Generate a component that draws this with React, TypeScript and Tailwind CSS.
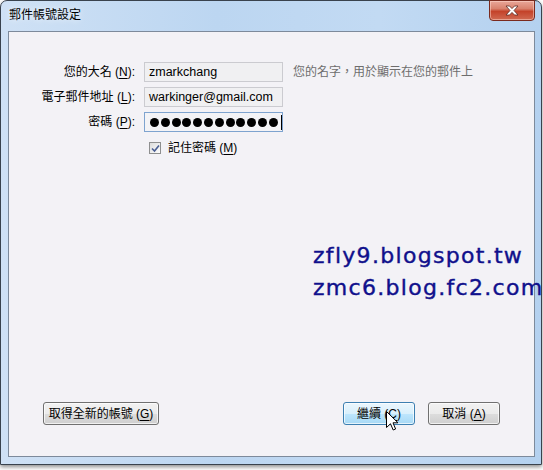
import React from "react";

const ui = { fontFamily: '"Liberation Sans", "Noto Sans CJK TC", sans-serif' };

function Btn({ label, hot, wide, focus }: { label: string; hot: string; wide: string; focus?: boolean }) {
    // win7 style push button, hot letter underlined
    const face = focus
        ? "border-[#3c7fb1] bg-[linear-gradient(#eaf6fd_0%,#d9f0fc_50%,#bee6fd_51%,#a7d9f5_100%)]"
        : "border-[#707070] bg-[linear-gradient(#f2f2f2_0%,#ebebeb_50%,#dddddd_51%,#cfcfcf_100%)]";
    return (
        <div className={`${wide} h-[23px] rounded-[3px] border ${face} flex items-center justify-center shadow-[inset_0_0_0_1px_rgba(255,255,255,0.7)]`}>
            <span className="text-[12px] leading-none text-black" style={ui}>
                {label} (<span className="underline underline-offset-2">{hot}</span>)
            </span>
        </div>
    );
}

function Field({ label, hot, children }: { label: string; hot: string; children: React.ReactNode }) {
    return (
        <>
            <div className="text-right text-[12px] leading-[20px] text-black pr-[1px]">
                {label} (<span className="underline underline-offset-2">{hot}</span>):
            </div>
            {children}
        </>
    );
}

export default function App() {
    const dots = Array.from({ length: 12 });
    return (
        <div className="relative w-[543px] h-[470px] bg-white overflow-hidden" style={ui}>
            <div className="relative w-[542px] h-[465px] rounded-t-[7px] border border-[#39424d] bg-[linear-gradient(90deg,#cfe1f5_0%,#bcd6f1_40%,#c2daf3_70%,#b4d1ef_100%)] flex flex-col shadow-[0_2px_4px_rgba(0,0,0,0.45)]">
                {/* title bar */}
                <div className="h-[30px] flex items-center pl-[8px] pb-[2px]">
                    <span className="text-[12px] leading-none text-black [text-shadow:0_0_6px_rgba(255,255,255,0.9)]">郵件帳號設定</span>
                </div>
                <div className="absolute top-[-1px] right-[6px] w-[46px] h-[21px] rounded-b-[4px] border border-[#7a2a1e] bg-[linear-gradient(#e9a799_0%,#d9826e_40%,#c4432a_55%,#d06a52_100%)] flex items-center justify-center shadow-[inset_0_0_0_1px_rgba(255,220,210,0.5)]">
                    <svg width="14" height="11" viewBox="0 0 14 11">
                        <path d="M1 1 L4.5 1 L7 3.6 L9.5 1 L13 1 L9 5.5 L13 10 L9.5 10 L7 7.4 L4.5 10 L1 10 L5 5.5 Z" fill="#fff" stroke="#5a2a22" strokeWidth="0.8" />
                    </svg>
                </div>

                {/* client area */}
                <div className="flex-1 ml-[7px] mr-[6px] mb-[7px] border border-[#7d8a9b] bg-[#f3f2f6] flex flex-col">
                    <div className="pt-[30px] grid grid-cols-[127px_139px_auto] gap-x-[8px] gap-y-[5px] items-center">
                        <Field label="您的大名" hot="N">
                            <div className="h-[20px] border border-[#cbcbd0] bg-[#f0f0f2] pl-[4px] text-[12.5px] leading-[18px] text-black">zmarkchang</div>
                        </Field>
                        <div className="pl-[2px] text-[12px] leading-[20px] text-[#6d6d6d]">您的名字，用於顯示在您的郵件上</div>
                        <Field label="電子郵件地址" hot="L">
                            <div className="h-[20px] border border-[#cbcbd0] bg-[#f0f0f2] pl-[4px] text-[12.5px] leading-[18px] text-black">warkinger@gmail.com</div>
                        </Field>
                        <div />
                        <Field label="密碼" hot="P">
                            <div className="h-[20px] border border-[#7ea3cf] bg-[#f3f3f6] pl-[5px] flex items-center gap-[1.8px]">
                                {dots.map((_, i) => (
                                    <span key={i} className="w-[9px] h-[9px] rounded-full bg-black" />
                                ))}
                                <span className="w-[1px] h-[15px] bg-black ml-[1px]" />
                            </div>
                        </Field>
                        <div />
                    </div>

                    <div className="mt-[8px] ml-[140px] h-[16px] flex items-center gap-[7px]">
                        <div className="w-[12px] h-[12px] border border-[#8e8f8f] bg-[linear-gradient(135deg,#dcdcdc,#fdfdfd)] flex items-center justify-center">
                            <svg width="9" height="9" viewBox="0 0 9 9">
                                <path d="M1 4.5 L3.5 7 L8 1.5" fill="none" stroke="#4a5e93" strokeWidth="1.6" />
                            </svg>
                        </div>
                        <span className="text-[12px] leading-none text-black">
                            記住密碼 (<span className="underline underline-offset-2">M</span>)
                        </span>
                    </div>

                    <div className="mt-auto pb-[31px] pl-[34px] pr-[34px] flex items-center">
                        <Btn label="取得全新的帳號" hot="G" wide="w-[116px]" />
                        <div className="ml-auto flex gap-[13px]">
                            <Btn label="繼續" hot="C" wide="w-[72px]" focus />
                            <Btn label="取消" hot="A" wide="w-[72px]" />
                        </div>
                    </div>
                </div>
            </div>

            {/* watermark over the screenshot */}
            <div className="absolute left-[313px] top-[240px] text-[22px] leading-[32px] tracking-[1.3px] text-[#10108c] whitespace-nowrap [-webkit-text-stroke:0.4px_#10108c]" style={{ fontFamily: '"DejaVu Sans", sans-serif' }}>
                <div>zfly9.blogspot.tw</div>
                <div>zmc6.blog.fc2.com</div>
            </div>

            {/* mouse pointer */}
            <svg className="absolute left-[386px] top-[411px]" width="13" height="21" viewBox="0 0 13 21">
                <path d="M0.5 0.5 L0.5 16.5 L4.5 12.8 L7.2 19 L9.6 18 L7 11.8 L12 11.8 Z" fill="#fff" stroke="#000" strokeWidth="1" strokeLinejoin="round" />
            </svg>
        </div>
    );
}
